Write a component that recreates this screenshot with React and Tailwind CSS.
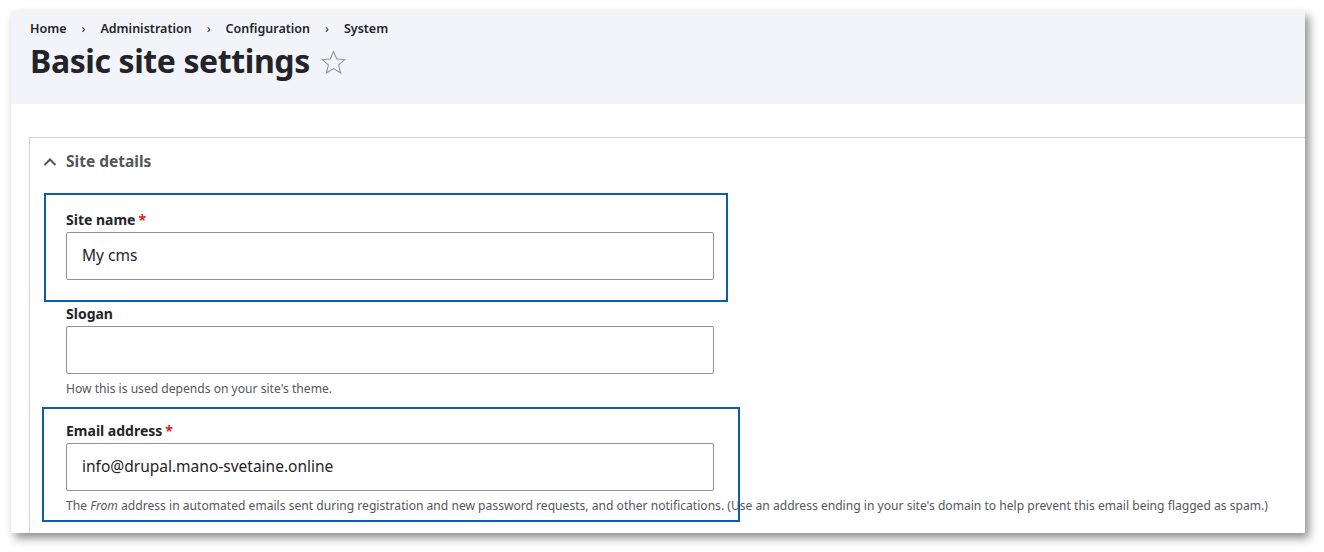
import React from 'react';

const font = { fontFamily: '"Noto Sans", "Open Sans", sans-serif' };

function Field({ label, required, value, help }) {
  return (
    <div>
      <label className="block text-[14px] leading-[18px] font-bold text-[#232429] pt-[1px] mb-[3px]">
        {label}
        {required && <span className="text-[#dc2323] ml-[3px]">*</span>}
      </label>
      <div className="w-[648px] h-[48px] border border-[#8e929c] rounded-[2px] bg-white flex items-center px-[15px] text-[15.5px] text-[#232429]">
        {value}
      </div>
      {help && <div className="mt-[7px] text-[12.1px] leading-[16px] text-[#545560] whitespace-nowrap">{help}</div>}
    </div>
  );
}

export default function App() {
  return (
    <div className="w-[1324px] h-[552px] bg-white pt-[11px] pl-[11px]" style={font}>
      <div className="relative w-[1294px] h-[522px] overflow-hidden bg-white shadow-[4px_5px_9px_rgba(0,0,0,0.45)]">
        {/* Header */}
        <div className="h-[93px] bg-[#f3f4f9] pl-[19px] pt-[9px]">
          <nav className="flex items-center text-[12.5px] leading-[17px] font-semibold text-[#232429]">
            <span>Home</span>
            <span className="mx-[15px] font-normal">›</span>
            <span>Administration</span>
            <span className="mx-[15px] font-normal">›</span>
            <span>Configuration</span>
            <span className="mx-[15px] font-normal">›</span>
            <span>System</span>
          </nav>
          <div className="flex items-center mt-[4px]">
            <h1 className="text-[32px] leading-[40px] font-bold text-[#232429] tracking-[-0.4px]">Basic site settings</h1>
            <svg className="ml-[11px] mt-[2px]" width="25" height="25" viewBox="0 0 24 24" fill="none" stroke="#8e929c" strokeWidth="1" strokeLinejoin="miter">
              <path d="M12 1.5l3.1 7.2 7.8.5-6 5.1 1.9 7.6L12 17.8l-6.8 4.1 1.9-7.6-6-5.1 7.8-.5z" />
            </svg>
          </div>
        </div>

        {/* Body */}
        <div className="pt-[33px] pl-[18px]">
          <div className="border-l border-t border-[#d3d4d9] h-[400px]">
            <div className="flex items-center h-[48px] pl-[13px]">
              <svg width="14" height="10" viewBox="0 0 14 10" fill="none" stroke="#545560" strokeWidth="2">
                <path d="M1.5 8l5.5-5.5 5.5 5.5" />
              </svg>
              <span className="ml-[9px] text-[15.5px] font-bold text-[#55565b]">Site details</span>
            </div>
            <div className="pl-[36px] pt-[24px]">
              <Field label="Site name" required value="My cms" />
              <div className="mt-[24px]">
                <Field label="Slogan" value="" help="How this is used depends on your site's theme." />
              </div>
              <div className="mt-[24px]">
                <Field
                  label="Email address"
                  required
                  value="info@drupal.mano-svetaine.online"
                  help={
                    <>
                      The <em>From</em> address in automated emails sent during registration and new password requests, and other notifications. (Use an address ending in your site's domain to help prevent this email being flagged as spam.)
                    </>
                  }
                />
              </div>
            </div>
          </div>
        </div>

        {/* Annotation boxes */}
        <div className="absolute left-[33px] top-[182px] w-[684px] h-[109px] border-2 border-[#0d5cae]" />
        <div className="absolute left-[31px] top-[396px] w-[698px] h-[115px] border-2 border-[#0d5cae]" />
      </div>
    </div>
  );
}
